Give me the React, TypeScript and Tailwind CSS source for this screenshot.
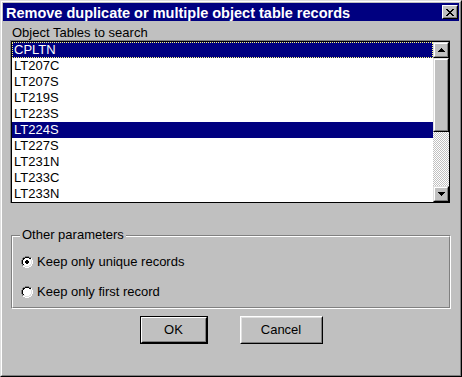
import React from 'react';

const PAL: Record<string, string> = {
  K: '#000000',
  G: '#808080',
  W: '#ffffff',
  L: '#dfdfdf',
};

function Pixels({ rows, className }: { rows: string[]; className?: string }) {
  const w = rows[0].length;
  const h = rows.length;
  const rects: React.ReactNode[] = [];
  rows.forEach((r, y) =>
    r.split('').forEach((c, x) => {
      if (PAL[c]) rects.push(<rect key={`${x}-${y}`} x={x} y={y} width={1} height={1} fill={PAL[c]} />);
    })
  );
  return (
    <svg width={w} height={h} viewBox={`0 0 ${w} ${h}`} shapeRendering="crispEdges" className={className}>
      {rects}
    </svg>
  );
}

const closeX = [
  'KK....KK',
  '.KK..KK.',
  '..KKKK..',
  '...KK...',
  '..KKKK..',
  '.KK..KK.',
  'KK....KK',
];

const arrowUp = ['...K...', '..KKK..', '.KKKKK.', 'KKKKKKK'];
const arrowDown = ['KKKKKKK', '.KKKKK.', '..KKK..', '...K...'];

const radioOff = [
  '....GGGG....',
  '..GGKKKKGG..',
  '.GKKWWWWKKW.',
  '.GKWWWWWWLW.',
  'GKWWWWWWWWLW',
  'GKWWWWWWWWLW',
  'GKWWWWWWWWLW',
  'GKWWWWWWWWLW',
  '.GKWWWWWWLW.',
  '.GLLWWWWLLW.',
  '..WWLLLLWW..',
  '....WWWW....',
];

const radioOn = [
  '....GGGG....',
  '..GGKKKKGG..',
  '.GKKWWWWKKW.',
  '.GKWWWWWWLW.',
  'GKWWWKKWWWLW',
  'GKWWKKKKWWLW',
  'GKWWKKKKWWLW',
  'GKWWWKKWWWLW',
  '.GKWWWWWWLW.',
  '.GLLWWWWLLW.',
  '..WWLLLLWW..',
  '....WWWW....',
];

const tables = ['CPLTN', 'LT207C', 'LT207S', 'LT219S', 'LT223S', 'LT224S', 'LT227S', 'LT231N', 'LT233C', 'LT233N'];

// raised bevel: light top/left, dark bottom/right
const raisedOuter = 'border border-t-[#dfdfdf] border-l-[#dfdfdf] border-r-black border-b-black';
const raisedInner = 'border border-t-white border-l-white border-r-[#808080] border-b-[#808080]';

function ScrollButton({ rows }: { rows: string[] }) {
  return (
    <div className={`h-[16px] w-[16px] ${raisedOuter}`}>
      <div className={`h-full w-full ${raisedInner} flex items-center justify-center`}>
        <Pixels rows={rows} />
      </div>
    </div>
  );
}

export default function App() {
  return (
    <div className="w-[462px] h-[377px] bg-[#c0c0c0] border border-t-[#dfdfdf] border-l-[#dfdfdf] border-r-black border-b-black font-['Liberation_Sans',Arial,sans-serif] text-[13px] text-black">
      <div className="h-full border border-t-white border-l-white border-r-[#808080] border-b-[#808080] p-px flex flex-col">
        {/* title bar */}
        <div className="h-[18px] bg-[#000080] flex items-center justify-between pl-[3px] pr-[1px]">
          <span className="text-white font-bold text-[14.5px] leading-[18px] pt-[1px] whitespace-nowrap">
            Remove duplicate or multiple object table records
          </span>
          <div className="w-[16px] h-[14px] border border-t-white border-l-white border-r-black border-b-black">
            <div className="w-full h-full bg-[#c0c0c0] border border-t-[#c0c0c0] border-l-[#c0c0c0] border-r-[#808080] border-b-[#808080] flex items-center justify-center">
              <Pixels rows={closeX} />
            </div>
          </div>
        </div>

        {/* list */}
        <div className="mt-[4px] ml-[9px] h-[15px] leading-[15px]">Object Tables to search</div>
        <div className="ml-[7px] w-[440px] h-[163px] border-t border-l border-[#808080]">
          <div className="w-full h-full border border-black flex">
            <div className="w-[421px] bg-white flex flex-col">
              {tables.map((t, i) => {
                const sel = i === 0 || i === 5;
                return (
                  <div
                    key={t}
                    className={`h-[16px] leading-[16px] pl-[2px] ${
                      sel ? 'bg-[#000080] text-white' : ''
                    } ${i === 0 ? 'outline-1 outline-dotted -outline-offset-1 outline-[#ffff80]' : ''}`}
                  >
                    {t}
                  </div>
                );
              })}
            </div>
            <div className="w-[16px] flex flex-col">
              <ScrollButton rows={arrowUp} />
              <div className={`h-[74px] w-[16px] ${raisedOuter}`}>
                <div className={`h-full w-full ${raisedInner} bg-[#c0c0c0]`} />
              </div>
              <div className="flex-1 bg-[repeating-conic-gradient(#c0c0c0_0_25%,#ffffff_0_50%)] bg-[length:2px_2px]" />
              <ScrollButton rows={arrowDown} />
            </div>
          </div>
        </div>

        {/* other parameters */}
        <div className="relative mt-[32px] ml-[8px] w-[440px] h-[74px] border border-t-[#808080] border-l-[#808080] border-r-white border-b-white">
          <div className="h-full w-full border border-t-white border-l-white border-r-[#808080] border-b-[#808080] flex flex-col pt-[17px] pl-[8px] gap-[14px]">
            <label className="h-[16px] flex items-center gap-[4px] leading-[16px]">
              <Pixels rows={radioOn} />
              <span>Keep only unique records</span>
            </label>
            <label className="h-[16px] flex items-center gap-[4px] leading-[16px]">
              <Pixels rows={radioOff} />
              <span>Keep only first record</span>
            </label>
          </div>
          <span className="absolute -top-[9px] left-[8px] px-[2px] bg-[#c0c0c0] leading-[15px]">Other parameters</span>
        </div>

        {/* buttons */}
        <div className="mt-[7px] flex justify-center gap-[32px]">
          <div className="w-[68px] h-[28px] border border-black">
            <div className="w-full h-full border border-t-white border-l-white border-r-black border-b-black">
              <div className="w-full h-full border border-t-[#c0c0c0] border-l-[#c0c0c0] border-r-[#808080] border-b-[#808080] flex items-center justify-center">
                OK
              </div>
            </div>
          </div>
          <div className="w-[83px] h-[28px] border border-t-white border-l-white border-r-black border-b-black">
            <div className="w-full h-full border border-t-[#dfdfdf] border-l-[#dfdfdf] border-r-[#808080] border-b-[#808080] flex items-center justify-center">
              Cancel
            </div>
          </div>
        </div>
      </div>
    </div>
  );
}
